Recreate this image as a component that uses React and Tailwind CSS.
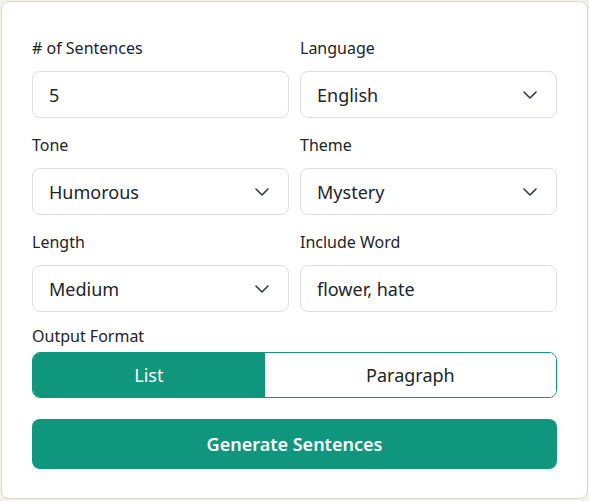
import React, { useState } from 'react';

const Field = ({ label, children }) => (
  <div className="flex flex-col">
    <label className="text-base leading-6 text-[#212529] mb-[11px]">{label}</label>
    {children}
  </div>
);

const Chevron = () => (
  <svg width="14" height="8" viewBox="0 0 14 8" fill="none" className="mr-[3px]">
    <polyline points="1,1 7,7 13,1" stroke="#343a40" strokeWidth="1.6" strokeLinecap="round" strokeLinejoin="round" />
  </svg>
);

const Select = ({ value }) => (
  <div className="flex items-center justify-between h-[47px] px-4 bg-white border border-[#dedede] rounded-lg">
    <span className="text-lg text-[#212529]">{value}</span>
    <Chevron />
  </div>
);

const TextInput = ({ value }) => (
  <div className="flex items-center h-[47px] px-4 bg-white border border-[#dedede] rounded-lg">
    <span className="text-lg text-[#212529]">{value}</span>
  </div>
);

export default function App() {
  const [format, setFormat] = useState('list');

  return (
    <div
      className="w-[589px] h-[501px] bg-[#f3f1ea] p-px"
      style={{ fontFamily: '"Noto Sans", "Open Sans", sans-serif' }}
    >
      <div className="h-[498px] bg-white border border-[#dcd9cc] rounded-lg px-[30px] pt-[34px]">
        <div className="grid grid-cols-2 gap-x-[11px] gap-y-[15px]">
          <Field label="# of Sentences">
            <TextInput value="5" />
          </Field>
          <Field label="Language">
            <Select value="English" />
          </Field>
          <Field label="Tone">
            <Select value="Humorous" />
          </Field>
          <Field label="Theme">
            <Select value="Mystery" />
          </Field>
          <Field label="Length">
            <Select value="Medium" />
          </Field>
          <Field label="Include Word">
            <TextInput value="flower, hate" />
          </Field>
        </div>

        <div className="mt-3">
          <div className="text-base leading-6 text-[#212529] mb-1">Output Format</div>
          <div className="flex h-[46px] border border-[#10967d] rounded-lg overflow-hidden">
            <button
              onClick={() => setFormat('list')}
              className={`flex-auto text-lg ${format === 'list' ? 'bg-[#10967d] text-white' : 'bg-white text-[#212529]'}`}
            >
              List
            </button>
            <button
              onClick={() => setFormat('paragraph')}
              className={`flex-auto text-lg ${format === 'paragraph' ? 'bg-[#10967d] text-white' : 'bg-white text-[#212529]'}`}
            >
              Paragraph
            </button>
          </div>
        </div>

        <button className="mt-[21px] w-full h-[50px] bg-[#10967d] text-white text-lg font-semibold rounded-lg">
          Generate Sentences
        </button>
      </div>
    </div>
  );
}
